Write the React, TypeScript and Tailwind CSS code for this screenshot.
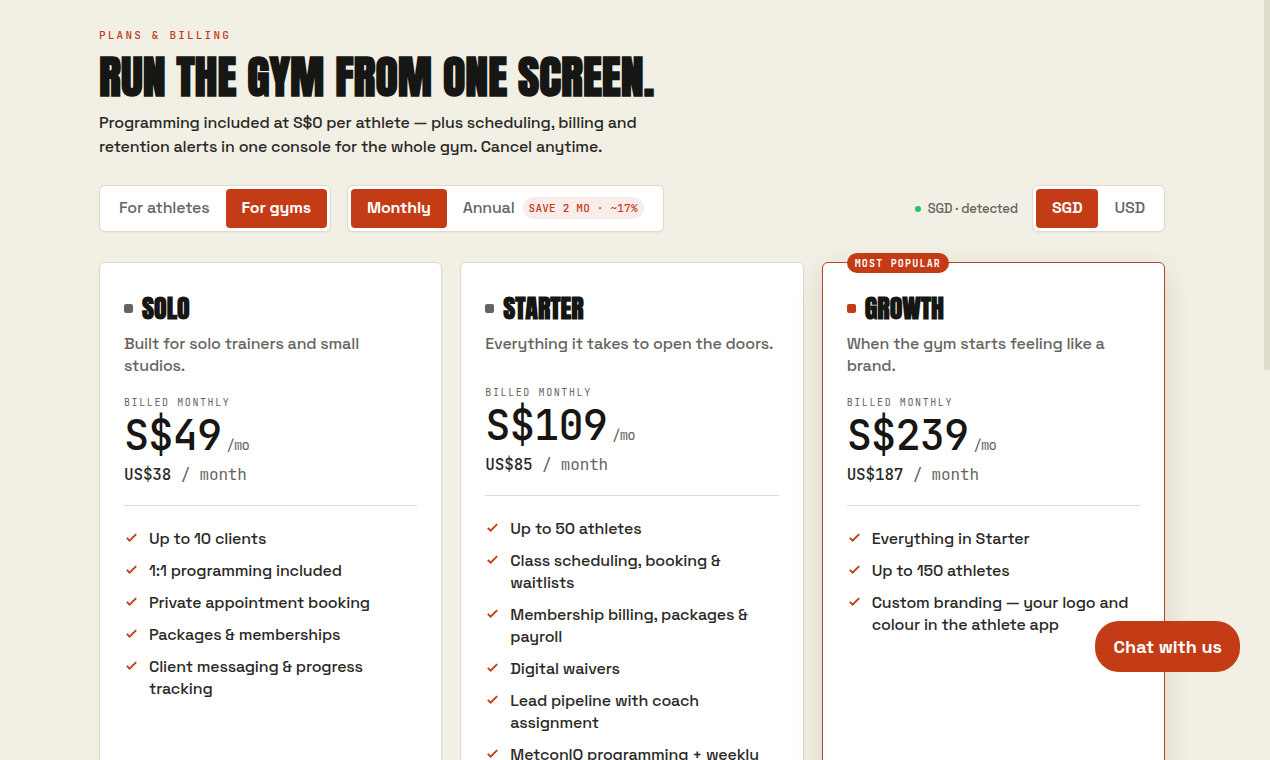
import React, { useState } from 'react';

interface Plan {
  name: string;
  tagline: string;
  price: string;
  usd: string;
  features: string[];
  popular?: boolean;
}

interface SegmentProps {
  active: boolean;
  onClick: () => void;
  children: React.ReactNode;
}

const plans: Plan[] = [
  {
    name: 'Solo',
    tagline: 'Built for solo trainers and small studios.',
    price: 'S$49',
    usd: 'US$38',
    features: [
      'Up to 10 clients',
      '1:1 programming included',
      'Private appointment booking',
      'Packages & memberships',
      'Client messaging & progress tracking'
    ]
  },
  {
    name: 'Starter',
    tagline: 'Everything it takes to open the doors.',
    price: 'S$109',
    usd: 'US$85',
    features: [
      'Up to 50 athletes',
      'Class scheduling, booking & waitlists',
      'Membership billing, packages & payroll',
      'Digital waivers',
      'Lead pipeline with coach assignment',
      'MetconIQ programming + weekly'
    ]
  },
  {
    name: 'Growth',
    tagline: 'When the gym starts feeling like a brand.',
    price: 'S$239',
    usd: 'US$187',
    popular: true,
    features: [
      'Everything in Starter',
      'Up to 150 athletes',
      'Custom branding — your logo and colour in the athlete app'
    ]
  }
];

const SegmentGroup: React.FC<{ label: string; children: React.ReactNode }> = ({ label, children }) => (
  <div
    role="group"
    aria-label={label}
    className="flex rounded-md border border-[#dfdbca] bg-white p-[3px] shadow-xs"
  >
    {children}
  </div>
);

const Segment: React.FC<SegmentProps> = ({ active, onClick, children }) => (
  <button
    onClick={onClick}
    aria-pressed={active}
    className={`flex items-center gap-2 rounded px-4 pt-[7px] pb-2 text-base whitespace-nowrap ${
      active ? 'bg-[#c43c16] font-bold text-white' : 'font-medium text-[#66645f]'
    }`}
  >
    {children}
  </button>
);

const CheckIcon = () => (
  <svg
    viewBox="0 0 24 24"
    fill="none"
    stroke="currentColor"
    strokeWidth="3"
    className="mt-[2px] size-[15px] shrink-0 text-[#c43c16]"
    aria-hidden="true"
  >
    <path d="M4.5 12.5 9 17 19.5 6.5" />
  </svg>
);

const PlanCard: React.FC<{ plan: Plan }> = ({ plan }) => (
  <article
    className={`relative min-h-[620px] rounded-md border bg-white p-6 ${
      plan.popular
        ? 'border-[#b5452c] shadow-[0_10px_30px_rgba(60,50,20,0.14)]'
        : 'border-[#dfdbca] shadow-xs'
    }`}
  >
    {plan.popular && (
      <span className="absolute -top-[10px] left-6 flex h-5 items-center rounded-full bg-[#c43c16] px-2 font-['JetBrains_Mono','DejaVu_Sans_Mono',monospace] text-[10px] font-bold tracking-[0.12em] text-white uppercase">
        Most popular
      </span>
    )}

    <h2 className="mb-1 flex h-[42px] items-center gap-[9px] font-[Anton,Roboto,sans-serif] text-[26px] font-bold tracking-normal text-[#161614] uppercase">
      <span className={`size-[9px] rounded-xs ${plan.popular ? 'bg-[#c43c16]' : 'bg-[#66645f]'}`} />
      {plan.name}
    </h2>
    <p className="min-h-[34px] text-base leading-[22px] font-medium text-[#66645f]">{plan.tagline}</p>

    <div className="mt-[18px] font-['JetBrains_Mono','DejaVu_Sans_Mono',monospace] text-[#66645f]">
      <div className="text-[10px] leading-4 tracking-[0.16em] uppercase">Billed monthly</div>
      <div className="mb-1 flex items-baseline gap-[5px] text-[42px] leading-[48px] font-medium tracking-[-0.02em] text-[#161614]">
        {plan.price}
        <span className="text-sm leading-none font-normal text-[#66645f]">/mo</span>
      </div>
      <div className="text-base leading-6">
        <span className="font-medium text-[#2a2926]">{plan.usd}</span> / month
      </div>
    </div>

    <ul className="mt-[18px] flex flex-col gap-[10px] border-t border-[#dedcd3] pt-[22px]">
      {plan.features.map((feature) => (
        <li key={feature} className="flex gap-[10px] text-base leading-[22px] font-medium text-[#2a2926]">
          <CheckIcon />
          {feature}
        </li>
      ))}
    </ul>
  </article>
);

const App: React.FC = () => {
  const [audience, setAudience] = useState('gyms');
  const [billing, setBilling] = useState('monthly');
  const [currency, setCurrency] = useState('SGD');

  return (
    <div className="h-screen overflow-y-auto bg-[#f2efe4] pr-[6px] font-['Space_Grotesk',Inter,sans-serif] tracking-[-0.01em] text-[#2a2926]">
      <main className="mx-auto max-w-[1130px] px-8 pt-[27px] pb-12">
        <header>
          <div className="font-['JetBrains_Mono','DejaVu_Sans_Mono',monospace] text-[11px] leading-4 font-medium tracking-[0.2em] text-[#c43c16] uppercase">
            Plans &amp; billing
          </div>
          <h1 className="mt-2 font-[Anton,Roboto,sans-serif] text-[46px] leading-[52px] font-bold tracking-normal text-[#161614] uppercase">
            Run the gym from one screen.
          </h1>
          <p className="mt-2 max-w-[560px] text-base leading-6 font-medium">
            Programming included at S$0 per athlete — plus scheduling, billing and retention alerts in one
            console for the whole gym. Cancel anytime.
          </p>
        </header>

        {/* Plan controls */}
        <div className="mt-[26px] flex items-center justify-between">
          <div className="flex gap-4">
            <SegmentGroup label="Audience">
              <Segment active={audience === 'athletes'} onClick={() => setAudience('athletes')}>
                For athletes
              </Segment>
              <Segment active={audience === 'gyms'} onClick={() => setAudience('gyms')}>
                For gyms
              </Segment>
            </SegmentGroup>
            <SegmentGroup label="Billing period">
              <Segment active={billing === 'monthly'} onClick={() => setBilling('monthly')}>
                Monthly
              </Segment>
              <Segment active={billing === 'annual'} onClick={() => setBilling('annual')}>
                Annual
                <span className="rounded-full bg-[#faecea] px-[6px] font-['JetBrains_Mono','DejaVu_Sans_Mono',monospace] text-[11px] leading-[22px] tracking-[0.02em] text-[#c43c16]">
                  SAVE 2 MO · ~17%
                </span>
              </Segment>
            </SegmentGroup>
          </div>

          <div className="flex items-center gap-[14px]">
            <div className="flex items-center gap-[7px] text-[13px] font-medium text-[#66645f]">
              <span className="size-[6px] rounded-full bg-[#22c55e]" />
              SGD · detected
            </div>
            <SegmentGroup label="Currency">
              <Segment active={currency === 'SGD'} onClick={() => setCurrency('SGD')}>
                SGD
              </Segment>
              <Segment active={currency === 'USD'} onClick={() => setCurrency('USD')}>
                USD
              </Segment>
            </SegmentGroup>
          </div>
        </div>

        {/* Plans */}
        <section className="mt-[30px] grid grid-cols-3 gap-[18px]">
          {plans.map((plan) => (
            <PlanCard key={plan.name} plan={plan} />
          ))}
        </section>
      </main>

      <button className="fixed right-[30px] bottom-[88px] h-[51px] rounded-3xl bg-[#c43c16] px-[18px] text-lg font-bold tracking-normal text-white">
        Chat with us
      </button>

      {/* Scroll thumb */}
      <div className="fixed top-0 right-0 h-[370px] w-[6px] bg-[#e0dccb]" />
    </div>
  );
};

export default App;
